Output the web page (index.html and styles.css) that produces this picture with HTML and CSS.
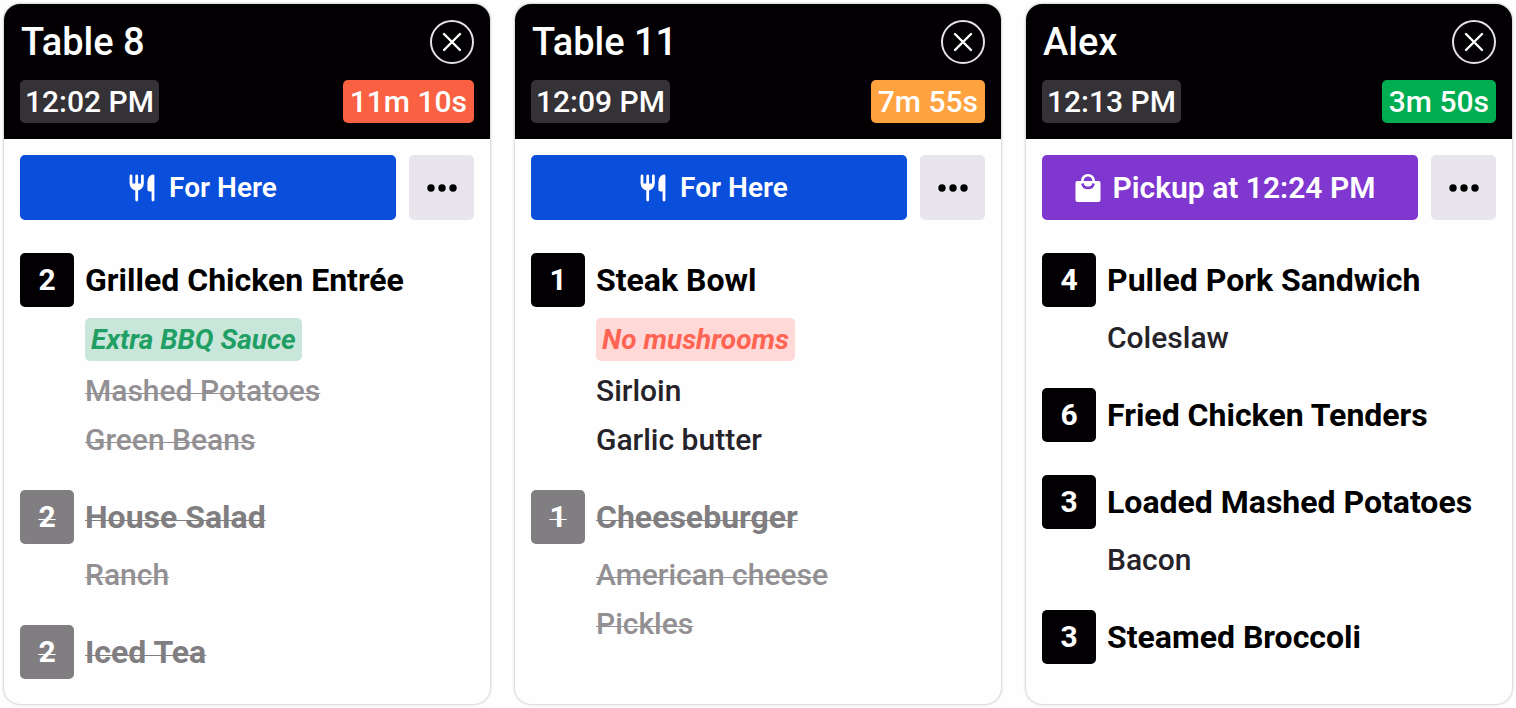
FILE: index.html
```html
<!DOCTYPE html>
<html lang="en">

<head>
    <meta charset="UTF-8">
    <meta name="viewport" content="width=device-width, initial-scale=1.0">
    <title>Kitchen Orders</title>
    <link rel="stylesheet" href="styles.css">
</head>

<body>
    <!-- Shared icons -->
    <svg class="icon-defs" aria-hidden="true">
        <symbol id="icon-close" viewBox="0 0 20 20">
            <path d="M2 2L18 18M18 2L2 18" fill="none" stroke="currentColor" stroke-width="2.4" stroke-linecap="round" />
        </symbol>
        <symbol id="icon-more" viewBox="0 0 30 8">
            <circle cx="4" cy="4" r="3.7" />
            <circle cx="15" cy="4" r="3.7" />
            <circle cx="26" cy="4" r="3.7" />
        </symbol>
        <symbol id="icon-dine" viewBox="0 0 26 28">
            <path d="M2 2V9.5A5.7 5.6 0 0 0 13.4 9.5V2M7.7 2V26" fill="none" stroke="currentColor" stroke-width="2.8" stroke-linecap="round" />
            <path d="M2 9.5H13.4A5.7 5.6 0 0 1 2 9.5Z" />
            <path d="M25.4 1.8V26A1.4 1.4 0 0 1 22.6 26V17.5H20.5Q18.4 17.5 18.4 15.4V8.5Q18.4 2 23.6 0.6Q25.4 0.3 25.4 1.8Z" />
        </symbol>
        <symbol id="icon-bag" viewBox="0 0 26 30">
            <rect x="0.5" y="8" width="25" height="21" rx="2" />
            <path d="M7.4 8.5V7.6A5.6 5.4 0 0 1 18.6 7.6V8.5" fill="none" stroke="currentColor" stroke-width="2.6" />
            <path class="bag-smile" d="M7.4 10.4A5.7 5.5 0 0 0 18.6 10.4" fill="none" stroke-width="2.6" />
        </symbol>
    </svg>

    <main class="board">
        <article class="ticket">
            <header class="ticket-header">
                <h2>Table 8</h2>
                <button type="button" class="close-btn" aria-label="Close Table 8"><svg><use href="#icon-close" /></svg></button>
                <time class="chip">12:02 PM</time>
                <span class="chip timer late">11m 10s</span>
            </header>
            <div class="actions">
                <button type="button" class="type-btn"><svg class="dine-icon"><use href="#icon-dine" /></svg>For Here</button>
                <button type="button" class="more-btn" aria-label="More options"><svg><use href="#icon-more" /></svg></button>
            </div>
            <ul class="items">
                <li>
                    <div class="item"><span class="qty">2</span><h3>Grilled Chicken Entrée</h3></div>
                    <ul class="mods">
                        <li class="note add">Extra BBQ Sauce</li>
                        <li class="done">Mashed Potatoes</li>
                        <li class="done">Green Beans</li>
                    </ul>
                </li>
                <li>
                    <div class="item done"><span class="qty">2</span><h3>House Salad</h3></div>
                    <ul class="mods">
                        <li class="done">Ranch</li>
                    </ul>
                </li>
                <li>
                    <div class="item done"><span class="qty">2</span><h3>Iced Tea</h3></div>
                </li>
            </ul>
        </article>

        <article class="ticket">
            <header class="ticket-header">
                <h2>Table 11</h2>
                <button type="button" class="close-btn" aria-label="Close Table 11"><svg><use href="#icon-close" /></svg></button>
                <time class="chip">12:09 PM</time>
                <span class="chip timer warning">7m 55s</span>
            </header>
            <div class="actions">
                <button type="button" class="type-btn"><svg class="dine-icon"><use href="#icon-dine" /></svg>For Here</button>
                <button type="button" class="more-btn" aria-label="More options"><svg><use href="#icon-more" /></svg></button>
            </div>
            <ul class="items">
                <li>
                    <div class="item"><span class="qty">1</span><h3>Steak Bowl</h3></div>
                    <ul class="mods">
                        <li class="note remove">No mushrooms</li>
                        <li>Sirloin</li>
                        <li>Garlic butter</li>
                    </ul>
                </li>
                <li>
                    <div class="item done"><span class="qty">1</span><h3>Cheeseburger</h3></div>
                    <ul class="mods">
                        <li class="done">American cheese</li>
                        <li class="done">Pickles</li>
                    </ul>
                </li>
            </ul>
        </article>

        <article class="ticket">
            <header class="ticket-header">
                <h2>Alex</h2>
                <button type="button" class="close-btn" aria-label="Close Alex"><svg><use href="#icon-close" /></svg></button>
                <time class="chip">12:13 PM</time>
                <span class="chip timer">3m 50s</span>
            </header>
            <div class="actions">
                <button type="button" class="type-btn pickup"><svg class="bag-icon"><use href="#icon-bag" /></svg>Pickup at 12:24 PM</button>
                <button type="button" class="more-btn" aria-label="More options"><svg><use href="#icon-more" /></svg></button>
            </div>
            <ul class="items">
                <li>
                    <div class="item"><span class="qty">4</span><h3>Pulled Pork Sandwich</h3></div>
                    <ul class="mods">
                        <li>Coleslaw</li>
                    </ul>
                </li>
                <li>
                    <div class="item"><span class="qty">6</span><h3>Fried Chicken Tenders</h3></div>
                </li>
                <li>
                    <div class="item"><span class="qty">3</span><h3>Loaded Mashed Potatoes</h3></div>
                    <ul class="mods">
                        <li>Bacon</li>
                    </ul>
                </li>
                <li>
                    <div class="item"><span class="qty">3</span><h3>Steamed Broccoli</h3></div>
                </li>
            </ul>
        </article>
    </main>
</body>

</html>
```
FILE: styles.css
```css
* {
    box-sizing: border-box;
}

body {
    margin: 0;
    background: #fefefe;
    font-family: Roboto, sans-serif;
    color: #000;
}

h2,
h3,
ul {
    margin: 0;
    padding: 0;
}

ul {
    list-style: none;
}

button {
    border: none;
    padding: 0;
    font-family: inherit;
    cursor: pointer;
}

svg {
    fill: currentColor;
}

.icon-defs {
    display: none;
}

.board {
    display: grid;
    grid-template-columns: repeat(3, 1fr);
    gap: 25px;
    min-height: 100vh;
    padding: 4px;
}

.ticket {
    background: #fefefe;
    border-radius: 16px;
    box-shadow: 0 0 3px rgba(0, 0, 0, 0.35);
    overflow: hidden;
}

/* Header */
.ticket-header {
    display: grid;
    grid-template-columns: 1fr auto;
    grid-template-rows: 44px 43px;
    gap: 16px;
    align-items: center;
    padding: 16px;
    background: #020003;
    color: #fff;
}

h2 {
    padding-left: 1px;
    font-size: 38px;
    line-height: 44px;
    font-weight: 500;
}

.close-btn {
    display: flex;
    justify-content: center;
    align-items: center;
    justify-self: end;
    width: 44px;
    height: 44px;
    border: 2px solid #e4e2e6;
    border-radius: 50%;
    background: transparent;
    color: #fff;
}

.close-btn svg {
    width: 20px;
    height: 20px;
}

.chip {
    justify-self: start;
    padding: 0 5px;
    border-radius: 5px;
    background: #343137;
    font-size: 30px;
    line-height: 43px;
    font-weight: 500;
}

.timer {
    justify-self: end;
    padding: 0 7px;
    background: #00ad50;
}

.timer.late {
    background: #f96142;
}

.timer.warning {
    background: #ffa341;
}

/* Order type */
.actions {
    display: flex;
    gap: 13px;
    padding: 16px 16px 0;
}

.type-btn {
    display: flex;
    flex: 1;
    justify-content: center;
    align-items: center;
    gap: 14px;
    height: 65px;
    padding-right: 10px;
    border-radius: 5px;
    background: #0a4fdb;
    color: #fff;
    font-size: 28px;
    font-weight: 600;
}

.type-btn.pickup {
    gap: 12px;
    background: #8037d0;
    font-size: 30px;
}

.dine-icon {
    width: 26px;
    height: 28px;
}

.bag-icon {
    width: 26px;
    height: 30px;
}

.bag-smile {
    stroke: #8037d0;
}

.more-btn {
    display: flex;
    justify-content: center;
    align-items: center;
    width: 65px;
    height: 65px;
    border-radius: 5px;
    background: #e8e5ec;
    color: #000;
}

.more-btn svg {
    width: 30px;
    height: 8px;
}

/* Items */
.items {
    display: flex;
    flex-direction: column;
    gap: 33px;
    padding: 33px 16px 25px;
}

.item {
    display: flex;
    align-items: center;
    gap: 11px;
}

.qty {
    width: 54px;
    height: 54px;
    border-radius: 5px;
    background: #020003;
    color: #fff;
    font-size: 30px;
    line-height: 54px;
    font-weight: 700;
    text-align: center;
}

h3 {
    font-size: 32px;
    line-height: 54px;
    font-weight: 700;
}

.mods {
    display: flex;
    flex-direction: column;
    align-items: flex-start;
    gap: 14px;
    padding: 13px 0 0 65px;
    color: #252329;
    font-size: 30px;
    line-height: 35px;
    font-weight: 500;
}

.note {
    margin: -2px 0;
    padding: 4px 6px;
    border-radius: 5px;
    font-size: 28px;
    font-style: italic;
    font-weight: 700;
}

.note.add {
    background: #c9e6da;
    color: #1f9f64;
}

.note.remove {
    background: #ffd8d8;
    color: #ff6452;
}

/* Raised underline, so the strike sits low on the letters */
.mods .done,
.item.done h3,
.item.done .qty {
    text-decoration: underline 1px;
    text-decoration-skip-ink: none;
    text-underline-offset: -8px;
}

.done {
    color: #929093;
}

.item.done {
    color: #807e81;
}

.item.done .qty {
    background: #807e81;
}
```
